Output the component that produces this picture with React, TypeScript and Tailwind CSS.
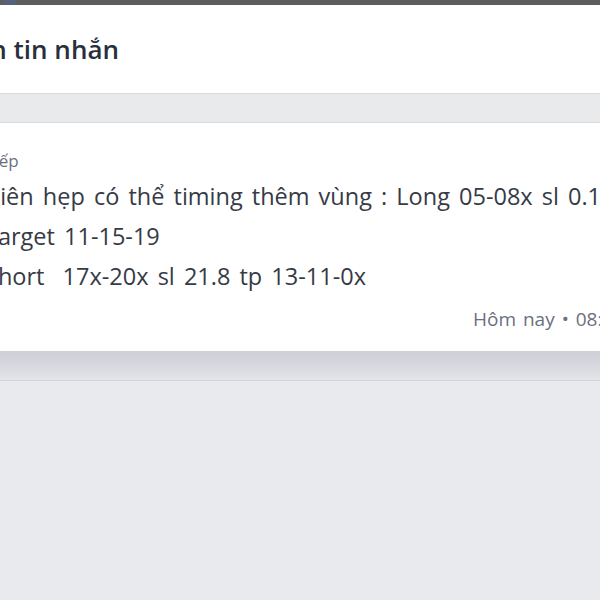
import React from 'react'

const lines = [
  'Biên hẹp có thể timing thêm vùng : Long 05-08x sl 0.1',
  'Target 11-15-19',
  'Short  17x-20x sl 21.8 tp 13-11-0x',
]

const App = () => {
  return (
    <div
      className="w-[600px] h-[600px] overflow-hidden bg-[#e9eaee] flex flex-col"
      style={{ fontFamily: '"Open Sans", "Noto Sans", sans-serif' }}
    >
      {/* top strip */}
      <div className="h-[5px] bg-[#5d5d5f] shrink-0 flex">
        <div className="w-[4px]" />
        <div className="w-[12px] bg-[#56607a]" />
      </div>

      {/* header */}
      <div className="h-[88px] bg-white shrink-0 flex items-center">
        <div className="w-[119px] flex justify-end whitespace-nowrap">
          <h1 className="text-[26px] font-semibold text-[#29303d]">Danh sách tin nhắn</h1>
        </div>
      </div>

      {/* toolbar band */}
      <div className="h-[30px] shrink-0 bg-[#e9eaec] border-y border-[#d9dadd]" />

      {/* message card */}
      <div className="bg-white shrink-0 pt-[26px] pb-[20px] whitespace-nowrap">
        <div className="-ml-[15px] w-[720px]">
          <div className="text-[17px] leading-[24px] text-[#6b7080]">Tiếp</div>
          <div className="mt-[3px] text-[23.5px] leading-[40px] text-[#363b45] [word-spacing:3px]">
            {lines.map((l) => (
              <div key={l} className="whitespace-pre">{l}</div>
            ))}
          </div>
          <div className="mt-[11px] ml-[488px] text-[19px] leading-[24px] text-[#6b7080] [word-spacing:2px]">
            Hôm nay • 08:15
          </div>
        </div>
      </div>

      {/* shadow under card */}
      <div className="h-[30px] shrink-0 bg-gradient-to-b from-[#cdced6] to-[#e3e4e8] border-b border-[#d2d3d8]" />
      <div className="flex-1 bg-[#e9eaee]" />
    </div>
  )
}

export default App
